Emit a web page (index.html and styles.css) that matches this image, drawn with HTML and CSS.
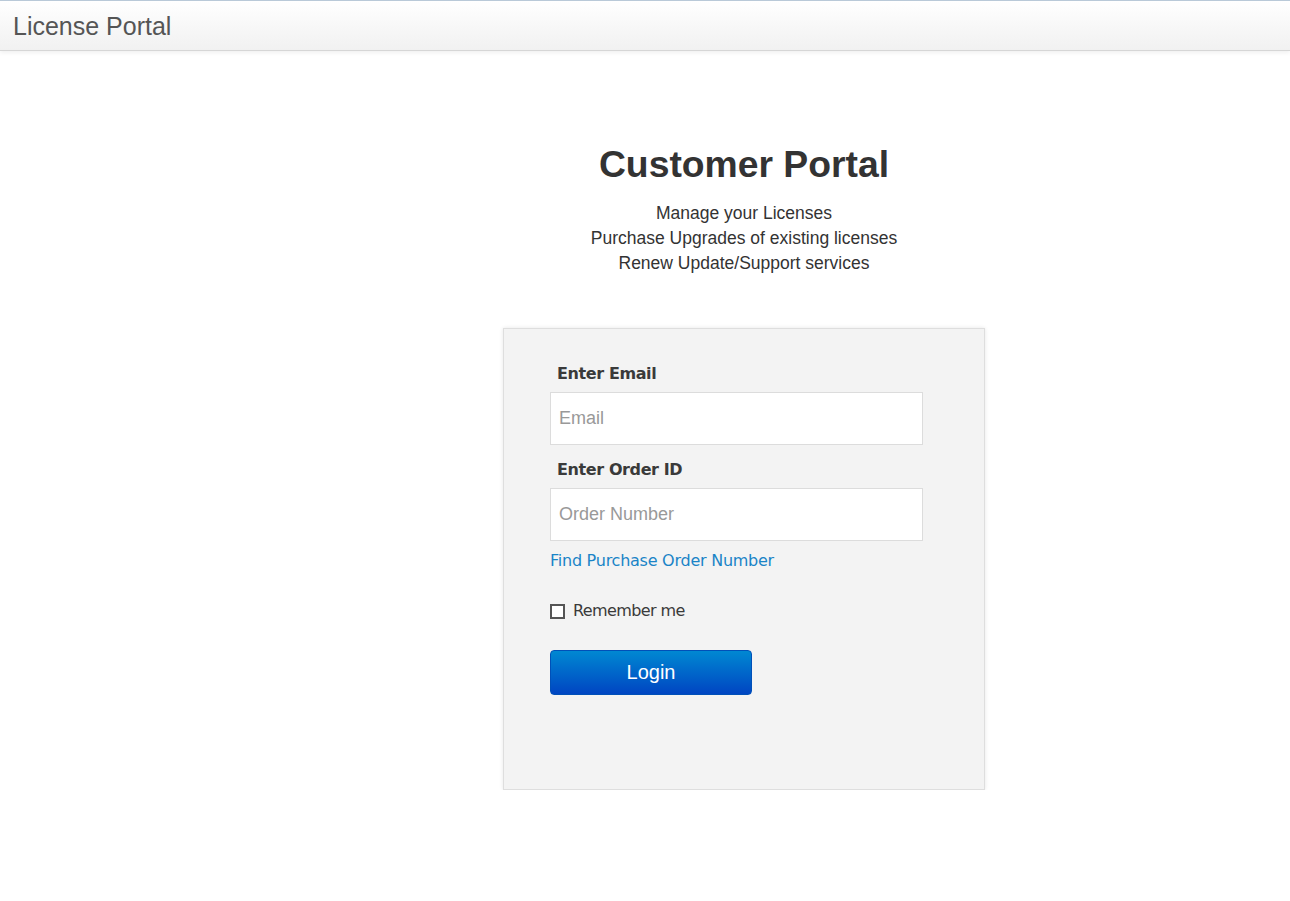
FILE: index.html
```html
<!DOCTYPE html>
<html>
<head>
<meta charset="utf-8">
<link rel="stylesheet" href="styles.css">
</head>
<body>
<header class="topbar">
  <span class="brand">License Portal</span>
</header>
<main class="main">
  <h1 class="title">Customer Portal</h1>
  <div class="intro">
    <div>Manage your Licenses</div>
    <div>Purchase Upgrades of existing licenses</div>
    <div>Renew Update/Support services</div>
  </div>
  <form class="card">
    <label class="label">Enter Email</label>
    <input class="field" type="text" placeholder="Email">
    <label class="label">Enter Order ID</label>
    <input class="field" type="text" placeholder="Order Number">
    <a class="link" href="#">Find Purchase Order Number</a>
    <label class="remember"><span class="box"></span>Remember me</label>
    <button class="btn" type="button">Login</button>
  </form>
</main>
</body>
</html>
```
FILE: styles.css
```css
html, body { margin: 0; padding: 0; background: #fff; }
body { font-family: "Liberation Sans", Arial, sans-serif; color: #333; }
.topbar {
  height: 49px;
  border-top: 1px solid #b9c9d8;
  border-bottom: 1px solid #d6d6d6;
  background: linear-gradient(#ffffff, #f1f1f1);
  box-shadow: 0 2px 4px rgba(0,0,0,0.06);
  display: flex;
  align-items: center;
  padding-left: 13px;
}
.brand { font-size: 25px; color: #555; margin-top: 1px; }
.main {
  padding-left: 198px;
  display: flex;
  flex-direction: column;
  align-items: center;
}
.title {
  margin: 91px 0 0;
  font-size: 37.3px;
  font-weight: bold;
  color: #333;
  line-height: 44px;
}
.intro {
  margin-top: 15px;
  text-align: center;
  font-size: 17.5px;
  line-height: 25px;
  color: #333;
}
.card {
  margin-top: 52px;
  box-sizing: border-box;
  width: 482px;
  height: 462px;
  padding: 33px 46px 0;
  background: #f3f3f3;
  border: 1px solid #dedede;
  box-shadow: 0 0 4px rgba(0,0,0,0.10);
  display: flex;
  flex-direction: column;
  align-items: flex-start;
}
.label {
  font-family: "DejaVu Sans", Verdana, sans-serif;
  font-weight: bold;
  font-size: 16px;
  color: #3a3a3a;
  padding-left: 7px;
  line-height: 24px;
  letter-spacing: -0.4px;
}
.field {
  margin-top: 6px;
  width: 373px;
  height: 53px;
  box-sizing: border-box;
  border: 1px solid #dcdcdc;
  background: #fff;
  padding: 0 8px;
  font-family: "Liberation Sans", Arial, sans-serif;
  font-size: 18px;
  color: #333;
  outline: none;
  margin-bottom: 13px;
}
.field::placeholder { color: #999; }
.link {
  font-family: "DejaVu Sans", Verdana, sans-serif;
  font-size: 16px;
  color: #1a84c7;
  text-decoration: none;
  margin-top: -4px;
  line-height: 22px;
  letter-spacing: -0.25px;
}
.remember {
  display: flex;
  align-items: center;
  margin-top: 28px;
  font-family: "DejaVu Sans", Verdana, sans-serif;
  font-size: 16px;
  color: #3a3a3a;
  letter-spacing: -0.6px;
  line-height: 22px;
}
.box {
  width: 11px;
  height: 11px;
  border: 2px solid #555;
  margin-right: 8px;
  background: #fff;
}
.btn {
  margin-top: 28px;
  width: 202px;
  height: 45px;
  border: 1px solid #0050b8;
  border-radius: 4px;
  background: linear-gradient(#0088d2, #0045c2);
  color: #fff;
  font-family: "Liberation Sans", Arial, sans-serif;
  font-size: 20px;
  cursor: pointer;
}
```
